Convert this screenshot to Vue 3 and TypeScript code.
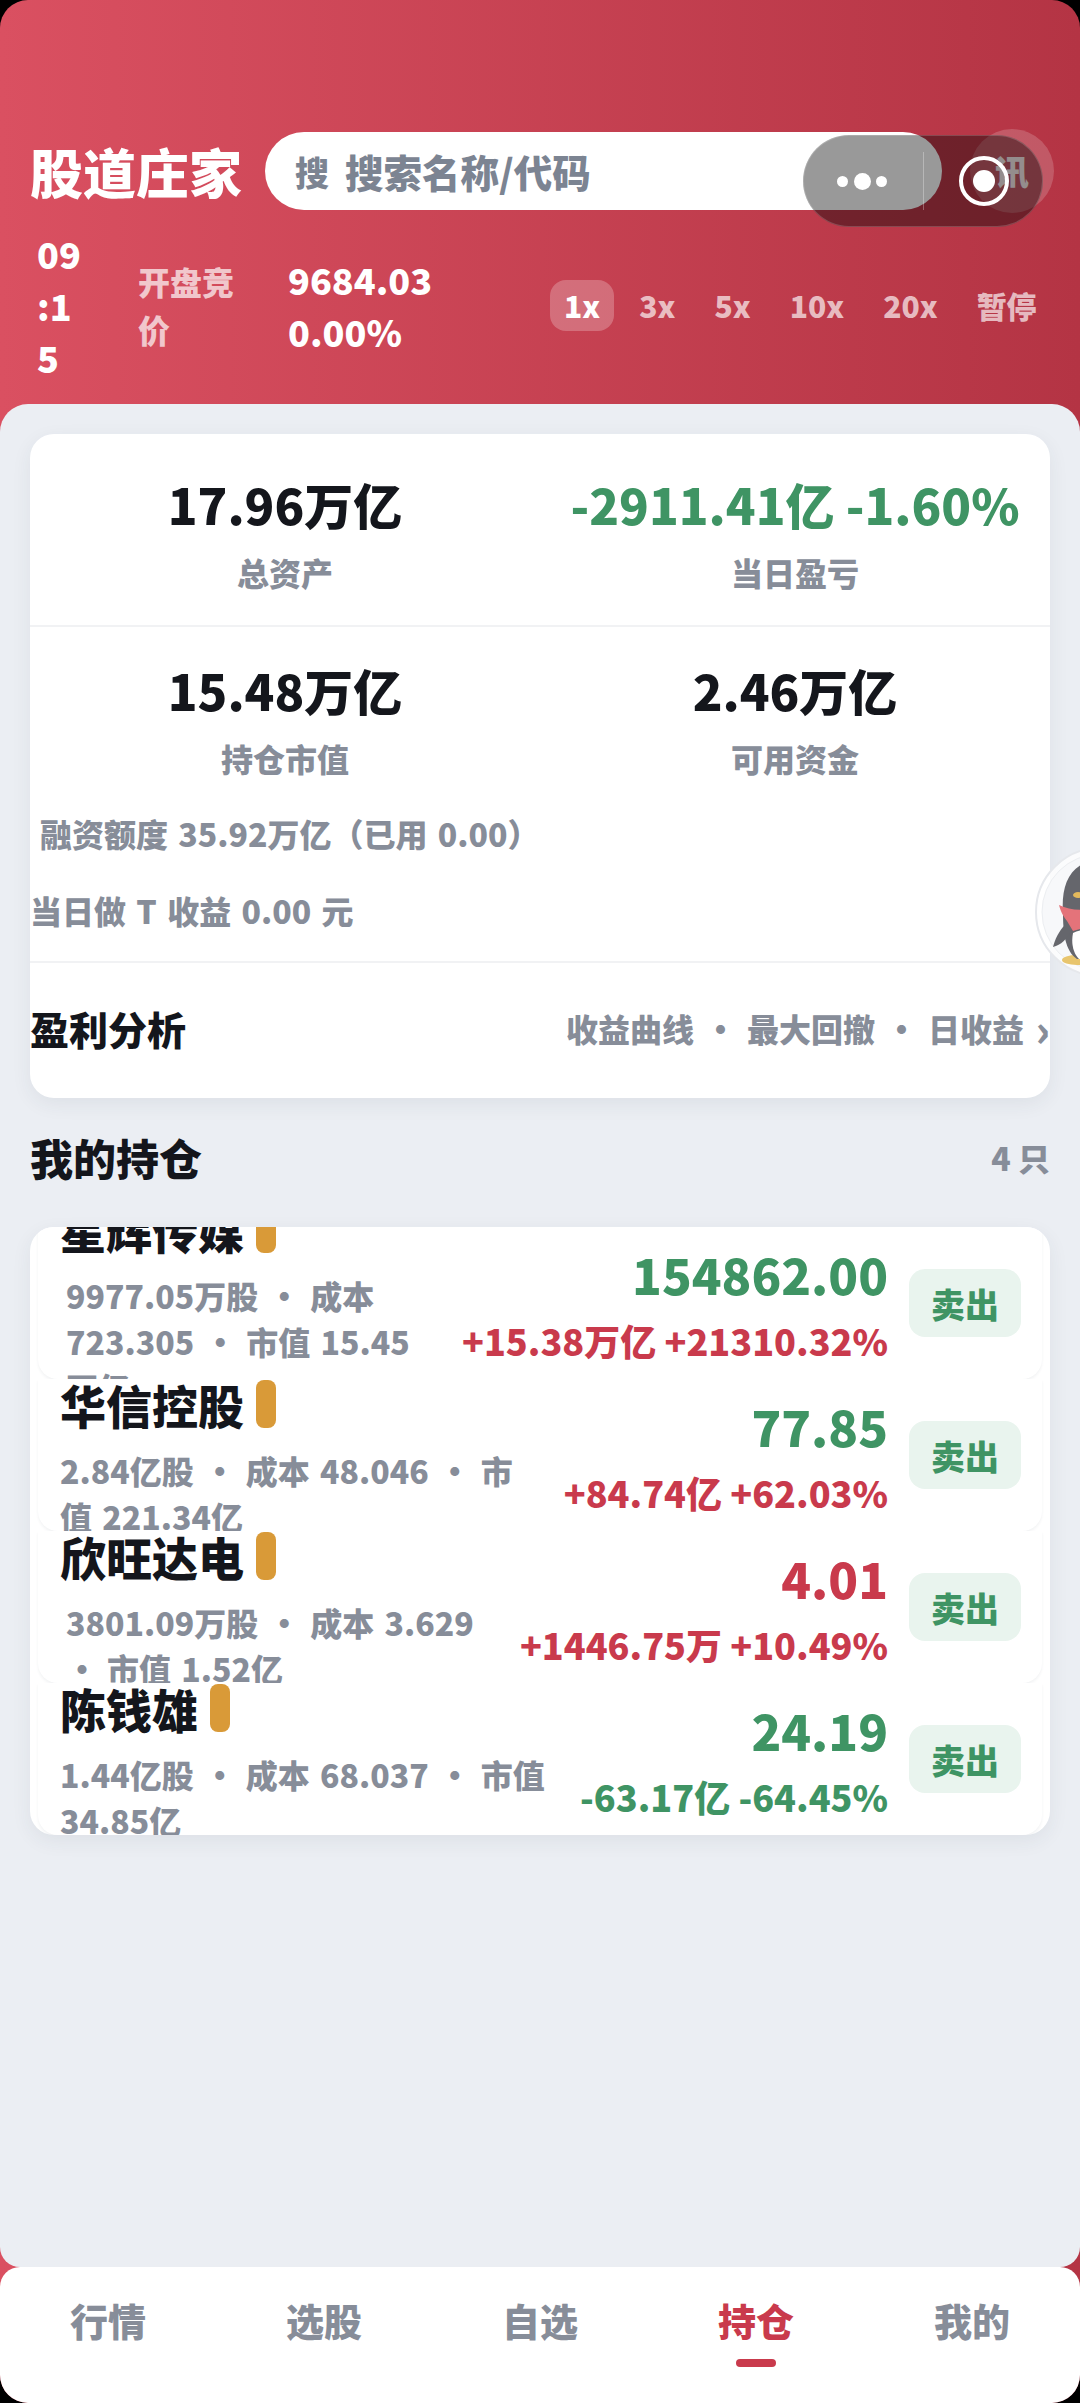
<script setup lang="ts">
interface Holding {
  name: string;
  lines: string[];
  indent: boolean;
  price: string;
  priceUp: boolean;
  change: string;
  changeUp: boolean;
}

const stats = [
  { value: '17.96万亿', label: '总资产', green: false },
  { value: '-2911.41亿 -1.60%', label: '当日盈亏', green: true },
];
const stats2 = [
  { value: '15.48万亿', label: '持仓市值' },
  { value: '2.46万亿', label: '可用资金' },
];
const speeds = ['1x', '3x', '5x', '10x', '20x', '暂停'];
const links = ['收益曲线', '最大回撤', '日收益'];
const tabs = ['行情', '选股', '自选', '持仓', '我的'];
const holdings: Holding[] = [
  {
    name: '星辉传媒',
    lines: ['9977.05万股 · 成本', '723.305 · 市值 15.45', '万亿'],
    indent: true,
    price: '154862.00',
    priceUp: false,
    change: '+15.38万亿 +21310.32%',
    changeUp: true,
  },
  {
    name: '华信控股',
    lines: ['2.84亿股 · 成本 48.046 · 市', '值 221.34亿'],
    indent: false,
    price: '77.85',
    priceUp: false,
    change: '+84.74亿 +62.03%',
    changeUp: true,
  },
  {
    name: '欣旺达电',
    lines: ['3801.09万股 · 成本 3.629', ' · 市值 1.52亿'],
    indent: true,
    price: '4.01',
    priceUp: true,
    change: '+1446.75万 +10.49%',
    changeUp: true,
  },
  {
    name: '陈钱雄',
    lines: ['1.44亿股 · 成本 68.037 · 市值', '34.85亿'],
    indent: false,
    price: '24.19',
    priceUp: false,
    change: '-63.17亿 -64.45%',
    changeUp: false,
  },
];
</script>

<template>
  <div class="page">
    <header class="top">
      <div class="search-row">
        <h1 class="brand">股道庄家</h1>
        <div class="search"><span class="search-icon">搜</span><span>搜索名称/代码</span></div>
        <div class="news">讯</div>
      </div>
      <div class="market-row">
        <div class="clock">09<br />:1<br />5</div>
        <div class="phase">开盘竞<br />价</div>
        <div class="index">9684.03<br />0.00%</div>
        <div class="speeds">
          <span v-for="(s, i) in speeds" :key="s" class="speed" :class="{ on: i === 0 }">{{ s }}</span>
        </div>
      </div>
    </header>

    <!-- mini program capsule floats above the page -->
    <div class="capsule">
      <div class="capsule-more"><i></i><i class="big"></i><i></i></div>
      <div class="capsule-line"></div>
      <div class="capsule-close"><b></b></div>
    </div>

    <main class="content">
      <section class="card">
        <div class="stat-grid">
          <div v-for="s in stats" :key="s.label" class="stat">
            <div class="stat-value" :class="{ green: s.green }">{{ s.value }}</div>
            <div class="stat-label">{{ s.label }}</div>
          </div>
        </div>
        <div class="stat-grid second">
          <div v-for="s in stats2" :key="s.label" class="stat">
            <div class="stat-value">{{ s.value }}</div>
            <div class="stat-label">{{ s.label }}</div>
          </div>
        </div>
        <div class="credit">融资额度 35.92万亿（已用 0.00）</div>
        <div class="t-profit">当日做 T 收益 0.00 元</div>
        <div class="analysis">
          <span class="analysis-title">盈利分析</span>
          <span class="analysis-links">
            <template v-for="(l, i) in links" :key="l">
              <span v-if="i" class="link-dot">·</span>
              <span>{{ l }}</span>
            </template>
            <span class="chev">›</span>
          </span>
        </div>
      </section>

      <div class="section-head">
        <h2>我的持仓</h2>
        <span>4 只</span>
      </div>

      <section class="list">
        <div v-for="h in holdings" :key="h.name" class="row">
          <div class="info">
            <div class="name-line">
              <span class="name">{{ h.name }}</span>
              <span class="tag"></span>
            </div>
            <div class="meta" :class="{ indent: h.indent }">
              <div v-for="l in h.lines" :key="l">
                <template v-for="(p, j) in l.split(' · ')" :key="j">
                  <span v-if="j" class="dot" :class="{ lead: !l.split(' · ')[0] }">·</span>{{ p }}
                </template>
              </div>
            </div>
          </div>
          <div class="quote">
            <div class="price" :class="h.priceUp ? 'red' : 'green'">{{ h.price }}</div>
            <div class="change" :class="h.changeUp ? 'red' : 'green'">{{ h.change }}</div>
          </div>
          <button class="sell" type="button">卖出</button>
        </div>
      </section>
    </main>

    <nav class="tabs">
      <div v-for="(t, i) in tabs" :key="t" class="tab" :class="{ active: i === 3 }">{{ t }}</div>
    </nav>

    <div class="bubble">
      <svg width="130" height="130" viewBox="0 0 130 130">
        <circle cx="65" cy="65" r="64" fill="#ffffff" fill-opacity="0.82" stroke="#e6e8ec" stroke-width="2" />
        <circle cx="65" cy="65" r="58" fill="#f7f8fa" stroke="#eceef1" stroke-width="1" />
        <ellipse cx="42" cy="113" rx="15" ry="5" fill="#e8c56e" />
        <path d="M28 66C26 40 34 16 60 14L66 15V112H42C30 104 28 85 28 66z" fill="#65666c" />
        <path d="M30 78C24 84 20 92 18 100C26 98 32 92 36 84z" fill="#65666c" />
        <path d="M38 86C46 82 56 82 66 84V112H44C38 106 36 96 38 86z" fill="#ffffff" />
        <path d="M24 58C36 64 52 64 66 60V82C56 80 46 81 38 84L32 74C29 70 26 66 24 58z" fill="#e4737a" />
        <ellipse cx="43" cy="48" rx="5" ry="3" fill="#e3b95c" />
      </svg>
    </div>
  </div>
</template>

<style scoped>
.page {
  position: relative;
  width: 1080px;
  height: 2403px;
  overflow: hidden;
  display: flex;
  flex-direction: column;
  background: linear-gradient(90deg, #da5061, #b43444);
  border-radius: 28px;
  font-family: "Noto Sans CJK SC", "Noto Sans", sans-serif;
  font-weight: 900;
  color: #14161c;
}
.top {
  height: 404px;
  flex: none;
  box-sizing: border-box;
  padding: 132px 30px 0;
  color: #fff;
}
.search-row {
  position: relative;
  display: flex;
  align-items: center;
  gap: 23px;
  height: 78px;
}
.brand {
  margin: 0;
  font-size: 53px;
  font-weight: 900;
  line-height: 78px;
  white-space: nowrap;
}
.search {
  width: 677px;
  height: 78px;
  box-sizing: border-box;
  padding-left: 30px;
  border-radius: 39px;
  background: #fff;
  display: flex;
  align-items: center;
  gap: 16px;
  font-size: 38.5px;
  color: #7c8492;
}
.search-icon {
  font-size: 34px;
}
.news {
  position: absolute;
  left: 940px;
  top: -3px;
  width: 84px;
  height: 84px;
  border-radius: 50%;
  background: rgba(255, 255, 255, 0.2);
  color: #fff;
  opacity: 0.9;
  font-size: 34px;
  line-height: 84px;
  text-align: center;
}
.market-row {
  display: flex;
  align-items: center;
  margin-top: 17px;
  padding-left: 7px;
}
.clock {
  width: 101px;
  flex: none;
  font-size: 36px;
  line-height: 52px;
}
.phase {
  width: 150px;
  flex: none;
  font-size: 32px;
  line-height: 48px;
  color: rgba(255, 255, 255, 0.7);
}
.index {
  width: 262px;
  flex: none;
  font-size: 36px;
  line-height: 52px;
}
.speeds {
  display: flex;
  align-items: center;
  flex: none;
  gap: 11px;
}
.speed {
  padding: 0 14px;
  height: 51px;
  line-height: 50px;
  border-radius: 16px;
  font-size: 30px;
  color: rgba(255, 255, 255, 0.68);
}
.speed.on {
  background: rgba(255, 255, 255, 0.24);
  color: #fff;
}
.capsule {
  position: absolute;
  left: 803px;
  top: 135px;
  width: 240px;
  height: 92px;
  border-radius: 46px;
  background: rgba(0, 0, 0, 0.4);
  box-shadow: inset 0 0 0 1px rgba(255, 255, 255, 0.18);
}
.capsule-more {
  position: absolute;
  left: 34px;
  top: 0;
  height: 92px;
  width: 50px;
  display: flex;
  align-items: center;
  justify-content: space-between;
}
.capsule-more i {
  width: 11px;
  height: 11px;
  border-radius: 50%;
  background: #fff;
}
.capsule-more i.big {
  width: 17px;
  height: 17px;
}
.capsule-line {
  position: absolute;
  left: 120px;
  top: 17px;
  width: 1px;
  height: 58px;
  background: rgba(255, 255, 255, 0.3);
}
.capsule-close {
  position: absolute;
  left: 156px;
  top: 21px;
  width: 50px;
  height: 50px;
  box-sizing: border-box;
  border: 4px solid #fff;
  border-radius: 50%;
  display: flex;
  align-items: center;
  justify-content: center;
}
.capsule-close b {
  width: 22px;
  height: 22px;
  border-radius: 50%;
  background: #fff;
}
.content {
  flex: 1;
  min-height: 0;
  box-sizing: border-box;
  padding: 30px 30px 0;
  background: #ebeef3;
  border-radius: 28px 28px 20px 20px;
}
.card {
  background: #fff;
  border-radius: 24px;
  box-shadow: 0 6px 20px rgba(40, 50, 70, 0.07);
  height: 664px;
  overflow: hidden;
}
.stat-grid {
  display: grid;
  grid-template-columns: 1fr 1fr;
  height: 193px;
  border-bottom: 2px solid #f1f2f4;
  padding-top: 37px;
  box-sizing: border-box;
}
.stat-grid.second {
  height: auto;
  border: none;
  padding-top: 30px;
}
.stat {
  text-align: center;
}
.stat-value {
  font-size: 49px;
  line-height: 66px;
  white-space: nowrap;
}
.stat-label {
  margin-top: 2px;
  font-size: 32px;
  line-height: 66px;
  color: #878d99;
}
.green {
  color: #3f9464;
}
.red {
  color: #c93a4c;
}
.credit {
  margin-top: 18px;
  padding-left: 10px;
  font-size: 32px;
  line-height: 48px;
  word-spacing: 3px;
  color: #878d99;
}
.t-profit {
  margin-top: 29px;
  font-size: 32px;
  line-height: 48px;
  word-spacing: 3px;
  color: #878d99;
}
.analysis {
  margin-top: 27px;
  border-top: 2px solid #f1f2f4;
  height: 130px;
  display: flex;
  align-items: center;
  justify-content: space-between;
}
.analysis-title {
  font-size: 39px;
}
.analysis-links {
  font-size: 32px;
  color: #878d99;
  white-space: nowrap;
  display: flex;
  align-items: center;
}
.link-dot {
  width: 53px;
  text-align: center;
}
.chev {
  width: 26px;
  text-align: right;
  font-size: 44px;
  line-height: 1;
}
.section-head {
  display: flex;
  justify-content: space-between;
  align-items: center;
  height: 62px;
  margin-top: 28px;
}
.section-head h2 {
  margin: 0;
  font-size: 43px;
  font-weight: 900;
}
.section-head span {
  font-size: 32px;
  color: #878d99;
}
.list {
  margin-top: 39px;
  height: 608px;
  border-radius: 24px;
  background: #fff;
  overflow: hidden;
  box-shadow: 0 6px 20px rgba(40, 50, 70, 0.07);
}
.row {
  position: relative;
  height: 152px;
  box-sizing: border-box;
  margin: 0 8px;
  padding: 0 21px 0 22px;
  display: flex;
  align-items: center;
  background: #fff;
  border-radius: 0 0 20px 20px;
  box-shadow: 0 2px 3px rgba(40, 50, 70, 0.06);
}
.info {
  flex: 1;
  min-width: 0;
  padding-top: 8px;
}
.name-line {
  display: flex;
  align-items: center;
  gap: 12px;
  height: 48px;
}
.name {
  font-size: 46px;
  line-height: 48px;
}
.tag {
  width: 20px;
  height: 48px;
  border-radius: 8px;
  background: #d99a38;
}
.meta {
  margin-top: 19px;
  font-size: 32px;
  line-height: 46px;
  word-spacing: 3px;
  color: #878d99;
  white-space: nowrap;
}
.meta.indent {
  padding-left: 6px;
}
.dot {
  display: inline-block;
  width: 52px;
  text-align: center;
}
.dot.lead {
  width: 41px;
  text-align: left;
}
.quote {
  flex: none;
  text-align: right;
  margin-right: 21px;
}
.price {
  font-size: 49px;
  line-height: 68px;
}
.change {
  font-size: 36px;
  line-height: 52px;
  margin-top: 6px;
}
.sell {
  flex: none;
  width: 112px;
  height: 68px;
  border: none;
  padding: 0;
  border-radius: 16px;
  background: #e9f4ee;
  color: #3f9464;
  font: inherit;
  font-size: 34px;
}
.tabs {
  flex: none;
  height: 136px;
  display: grid;
  grid-template-columns: repeat(5, 1fr);
  background: #fff;
  border-radius: 20px 20px 0 0;
}
.tab {
  position: relative;
  text-align: center;
  font-size: 38px;
  line-height: 106px;
  color: #878d99;
}
.tab.active {
  color: #c93a4c;
}
.tab.active::after {
  content: "";
  position: absolute;
  left: 88px;
  top: 92px;
  width: 40px;
  height: 8px;
  border-radius: 4px;
  background: #c93a4c;
}
.bubble {
  position: absolute;
  left: 1035px;
  top: 847px;
}
</style>

<style>
html,
body {
  background: #000;
}
</style>
